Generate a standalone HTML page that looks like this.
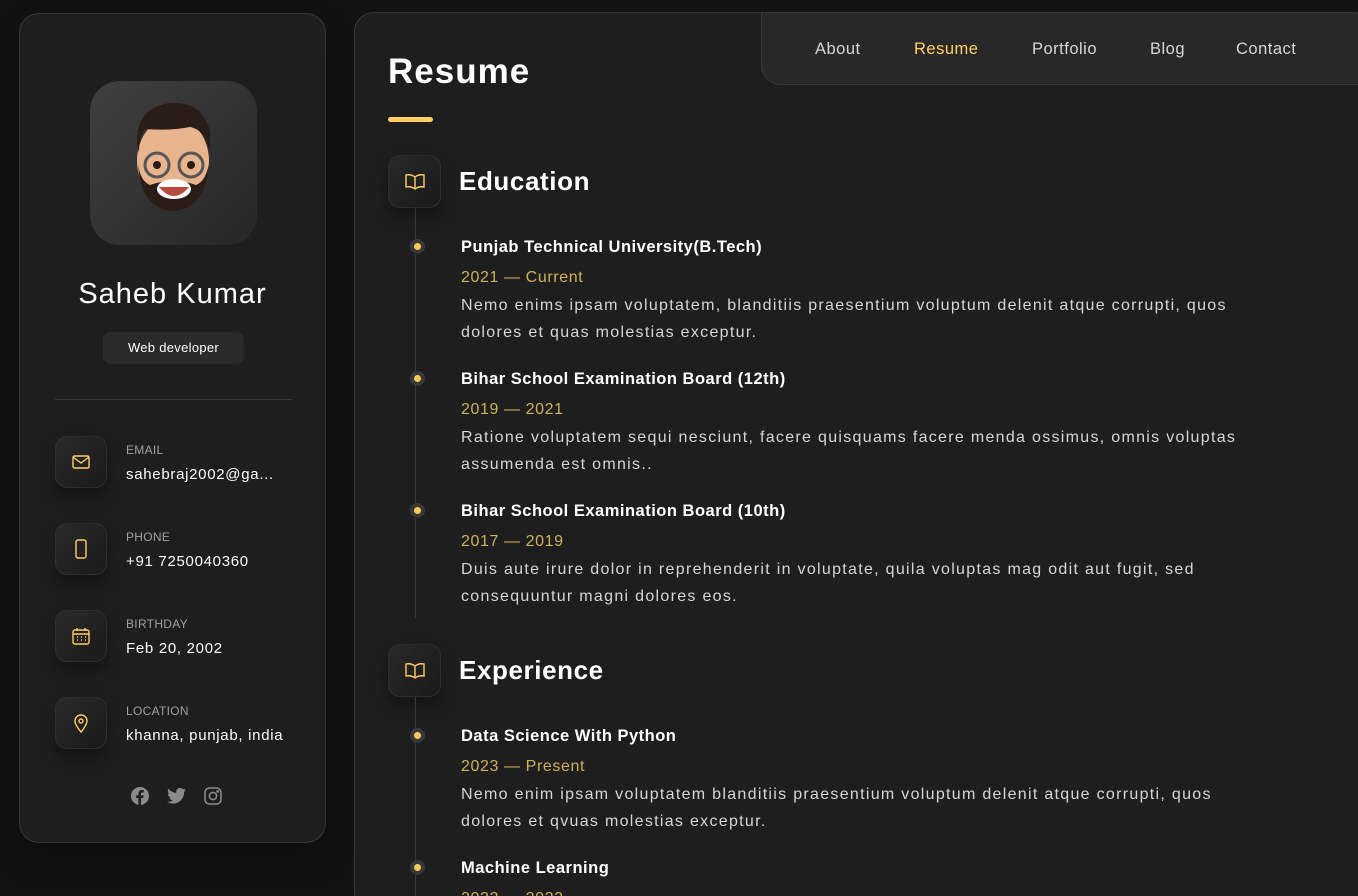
<!DOCTYPE html>
<html style="width:1358px;height:896px;overflow:hidden"><head><style>
*{margin:0;padding:0;box-sizing:border-box}
body{width:1358px;height:896px;overflow:hidden;background:#121212;font-family:"Liberation Sans",sans-serif;color:#fff;position:relative}
.side{position:absolute;left:19px;top:13px;width:307px;height:830px;background:#1e1e1f;border:1px solid #383838;border-radius:20px;box-shadow:0 16px 30px rgba(0,0,0,.25)}
.av{position:absolute;left:70px;top:67px;width:167px;height:164px;border-radius:30px;background:linear-gradient(135deg,#404040,#262626)}
.name{position:absolute;left:0;width:100%;top:264px;text-align:center;font-size:29px;font-weight:500;letter-spacing:1px}
.badge{position:absolute;left:83px;top:318px;width:141px;height:32px;border-radius:8px;background:#2b2b2c;font-size:13px;text-align:center;line-height:32px;letter-spacing:.3px}
.sep{position:absolute;left:35px;width:237px;top:385px;height:1px;background:#383838}
.ci{position:absolute;left:35px;width:307px}
.ib{position:absolute;left:0;top:0;width:52px;height:52px;border-radius:12px;background:linear-gradient(135deg,#2a2a2b,#1a1a1b);box-shadow:0 8px 14px rgba(0,0,0,.35);border:1px solid #2e2e2e;display:flex;align-items:center;justify-content:center}
.lb{position:absolute;left:71px;top:7px;font-size:12px;color:#a0a0a0;letter-spacing:.3px}
.vl{position:absolute;left:71px;top:30px;font-size:15px;color:#fafafa;white-space:nowrap;letter-spacing:.7px}
.main{position:absolute;left:354px;top:12px;width:1020px;height:900px;background:#1e1e1f;border:1px solid #383838;border-radius:20px}
.nav{position:absolute;left:761px;top:12px;width:610px;height:73px;background:#282828;border:1px solid #383838;border-radius:0 20px 0 20px}
.nav span{position:absolute;top:27px;font-size:16.5px;color:#d6d6d6;font-weight:500;letter-spacing:.5px}
h1{position:absolute;left:388px;top:52px;font-size:35px;font-weight:700;letter-spacing:1px}
.ul{position:absolute;left:388px;top:117px;width:45px;height:5px;border-radius:3px;background:#ffcf66}
.sib{position:absolute;left:388px;width:53px;height:53px;border-radius:12px;background:linear-gradient(135deg,#2a2a2b,#19191a);box-shadow:0 8px 14px rgba(0,0,0,.35);border:1px solid #2e2e2e;display:flex;align-items:center;justify-content:center}
.st{position:absolute;left:459px;font-size:26px;font-weight:700;letter-spacing:.6px}
.line{position:absolute;left:415px;width:1px;background:#383838}
.dot{position:absolute;left:410px;width:15px;height:15px;border-radius:50%;background:#38383a}
.dot:after{content:"";position:absolute;left:4px;top:4px;width:7px;height:7px;border-radius:50%;background:#ffc95a}
.it{position:absolute;left:461px}
.it b{display:block;font-size:16.5px;font-weight:700;height:32px;line-height:20px;letter-spacing:.5px;white-space:nowrap}
.it i{display:block;font-style:normal;color:#ceb15a;font-size:16px;height:28px;line-height:18px;letter-spacing:.6px}
.it p{font-size:16px;color:#d6d6d6;line-height:27px;white-space:nowrap;margin-top:-5px;letter-spacing:1.3px}
</style></head><body>
<div class="side">
 <div class="av">
  <svg width="167" height="164" viewBox="0 0 167 164">
   <ellipse cx="83" cy="80" rx="36" ry="44" fill="#e7b48e"/>
   <path d="M47 62 Q46 26 80 22 Q112 20 120 50 L120 70 Q114 48 100 46 Q80 50 55 48 Q49 56 49 72Z" fill="#2a1d17"/>
   <path d="M48 82 Q50 128 83 130 Q116 128 119 82 Q116 100 106 104 Q83 96 60 104 Q50 100 48 82Z" fill="#2a1d17"/>
   <ellipse cx="84" cy="108" rx="17" ry="10" fill="#fff"/>
   <path d="M69 106 Q84 124 99 106" fill="#b74a3f"/>
   <circle cx="67" cy="84" r="12" fill="none" stroke="#555" stroke-width="3"/>
   <circle cx="101" cy="84" r="12" fill="none" stroke="#555" stroke-width="3"/>
   <circle cx="67" cy="84" r="4" fill="#2a1d17"/><circle cx="101" cy="84" r="4" fill="#2a1d17"/>
  </svg>
 </div>
 <div class="name">Saheb Kumar</div>
 <div class="badge">Web developer</div>
 <div class="sep"></div>
 <div class="ci" style="top:422px"><div class="ib"><svg width="18" height="14" viewBox="0 0 18 14" fill="none" stroke="#ffcf66" stroke-width="1.4"><rect x="1" y="1" width="16" height="12" rx="1.5"/><path d="M1 2l8 6 8-6"/></svg></div><div class="lb">EMAIL</div><div class="vl">sahebraj2002@ga...</div></div>
 <div class="ci" style="top:509px"><div class="ib"><svg width="12" height="20" viewBox="0 0 12 20" fill="none" stroke="#ffcf66" stroke-width="1.4"><rect x="1" y="1" width="10" height="18" rx="2"/></svg></div><div class="lb">PHONE</div><div class="vl">+91 7250040360</div></div>
 <div class="ci" style="top:596px"><div class="ib"><svg width="18" height="18" viewBox="0 0 18 18" fill="none" stroke="#ffcf66" stroke-width="1.4"><rect x="1" y="3" width="16" height="14" rx="2"/><path d="M1 7h16M5 1v3M13 1v3M5 10h1M9 10h1M13 10h1M5 13h1M9 13h1M13 13h1"/></svg></div><div class="lb">BIRTHDAY</div><div class="vl">Feb 20, 2002</div></div>
 <div class="ci" style="top:683px"><div class="ib"><svg width="14" height="20" viewBox="0 0 14 20" fill="none" stroke="#ffcf66" stroke-width="1.4"><path d="M7 19s6-7 6-11A6 6 0 0 0 1 8c0 4 6 11 6 11z"/><circle cx="7" cy="8" r="2"/></svg></div><div class="lb">LOCATION</div><div class="vl">khanna, punjab, india</div></div>
 <svg style="position:absolute;left:111px;top:773px" width="18" height="18" viewBox="0 0 18 18"><circle cx="9" cy="9" r="9" fill="#8a8a8a"/><path d="M10 18v-7h2.3l.3-2.6H10V6.8c0-.8.2-1.3 1.3-1.3h1.4V3.2A18 18 0 0 0 10.700 3C8.700 3 7.400 4.200 7.400 6.400v2H5.100V11h2.300v7z" fill="#1e1e1f"/></svg>
 <svg style="position:absolute;left:147px;top:774px" width="19" height="16" viewBox="0 0 24 20"><path d="M24 2.4a10 10 0 0 1-2.8.8A5 5 0 0 0 23.3.4a10 10 0 0 1-3.1 1.2A4.9 4.9 0 0 0 11.800 6 14 14 0 0 1 1.700.9a4.900 4.900 0 0 0 1.500 6.600A4.900 4.900 0 0 1 1 6.900a4.900 4.900 0 0 0 3.900 4.900 5 5 0 0 1-2.200.1 4.900 4.900 0 0 0 4.600 3.400A9.900 9.900 0 0 1 0 17.300 14 14 0 0 0 7.500 19.500c9.100 0 14-7.500 14-14v-.6A10 10 0 0 0 24 2.400z" fill="#8a8a8a"/></svg>
 <svg style="position:absolute;left:184px;top:773px" width="18" height="18" viewBox="0 0 18 18" fill="none" stroke="#8a8a8a" stroke-width="1.6"><rect x="1" y="1" width="16" height="16" rx="4.5"/><circle cx="9" cy="9" r="3.6"/><circle cx="13.6" cy="4.4" r=".6" fill="#8a8a8a"/></svg>
</div>
<div class="main"></div>
<div class="nav">
 <span style="left:53px">About</span><span style="left:152px;color:#ffd166">Resume</span><span style="left:270px">Portfolio</span><span style="left:388px">Blog</span><span style="left:474px">Contact</span>
</div>
<h1>Resume</h1><div class="ul"></div>
<div class="sib" style="top:155px"><svg width="20" height="16" viewBox="0 0 20 16" fill="none" stroke="#ffcf66" stroke-width="1.4"><path d="M10 3Q6 0 1 1v12q5-1 9 2 4-3 9-2V1q-5-1-9 2zM10 3v12"/></svg></div>
<div class="st" style="top:166px">Education</div>
<div class="line" style="top:208px;height:410px"></div>
<div class="dot" style="top:239px"></div><div class="dot" style="top:371px"></div><div class="dot" style="top:503px"></div>
<div class="it" style="top:237px"><b>Punjab Technical University(B.Tech)</b><i>2021 — Current</i><p>Nemo enims ipsam voluptatem, blanditiis praesentium voluptum delenit atque corrupti, quos<br>dolores et quas molestias exceptur.</p></div>
<div class="it" style="top:369px"><b>Bihar School Examination Board (12th)</b><i>2019 — 2021</i><p>Ratione voluptatem sequi nesciunt, facere quisquams facere menda ossimus, omnis voluptas<br>assumenda est omnis..</p></div>
<div class="it" style="top:501px"><b>Bihar School Examination Board (10th)</b><i>2017 — 2019</i><p>Duis aute irure dolor in reprehenderit in voluptate, quila voluptas mag odit aut fugit, sed<br>consequuntur magni dolores eos.</p></div>
<div class="sib" style="top:644px"><svg width="20" height="16" viewBox="0 0 20 16" fill="none" stroke="#ffcf66" stroke-width="1.4"><path d="M10 3Q6 0 1 1v12q5-1 9 2 4-3 9-2V1q-5-1-9 2zM10 3v12"/></svg></div>
<div class="st" style="top:655px">Experience</div>
<div class="line" style="top:697px;height:200px"></div>
<div class="dot" style="top:728px"></div><div class="dot" style="top:860px"></div>
<div class="it" style="top:726px"><b>Data Science With Python</b><i>2023 — Present</i><p>Nemo enim ipsam voluptatem blanditiis praesentium voluptum delenit atque corrupti, quos<br>dolores et qvuas molestias exceptur.</p></div>
<div class="it" style="top:858px"><b>Machine Learning</b><i>2022 — 2023</i></div>
</body></html>
